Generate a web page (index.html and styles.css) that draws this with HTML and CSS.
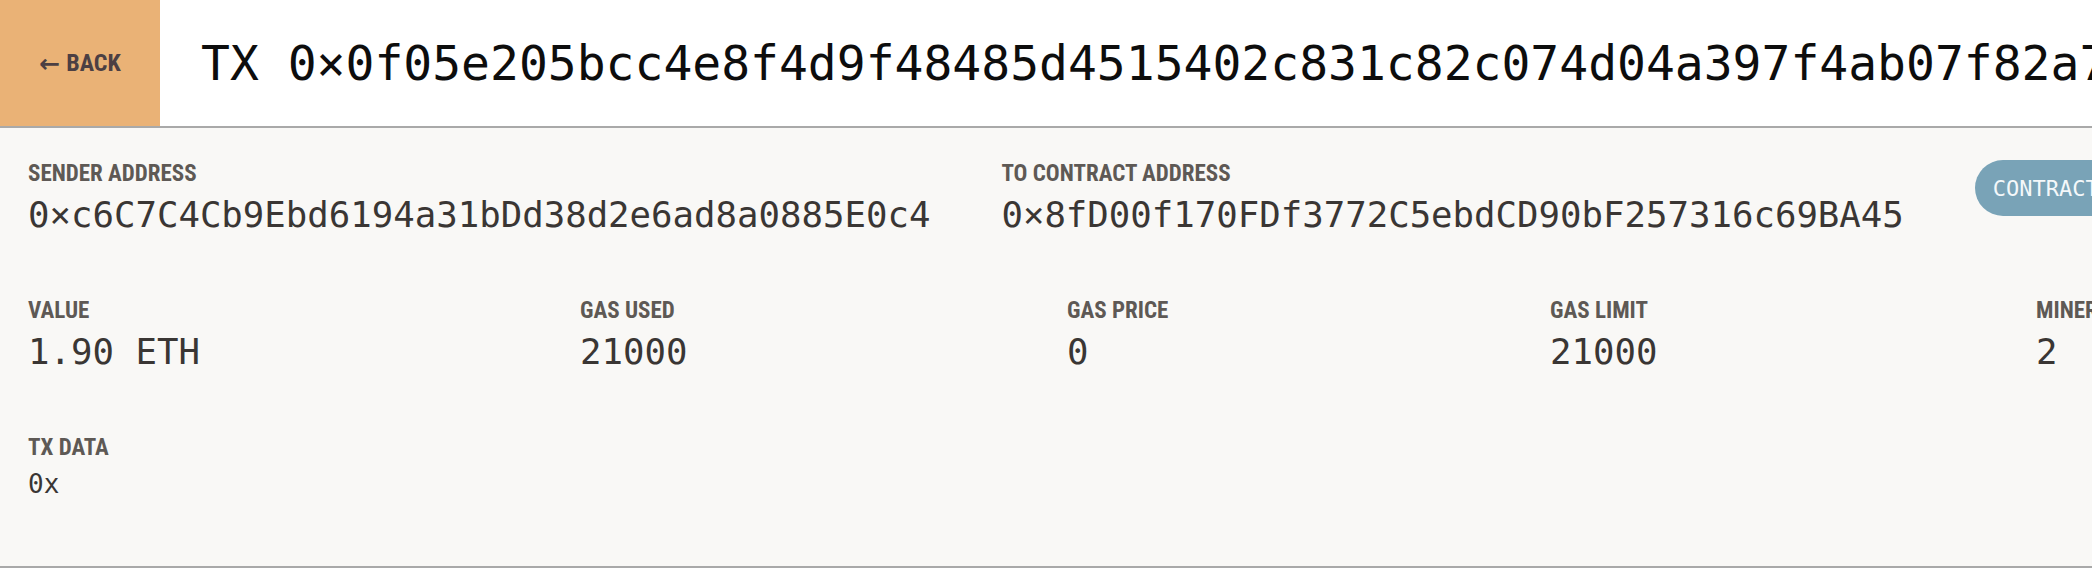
FILE: index.html
```html
<!DOCTYPE html>
<html lang="en">
<head>
<meta charset="utf-8">
<title>Transaction</title>
<link rel="stylesheet" href="styles.css">
</head>
<body>
<header class="topbar">
  <a class="back" href="#"><span class="back-arrow">←</span> BACK</a>
  <h1 class="title">TX 0×0f05e205bcc4e8f4d9f48485d4515402c831c82c074d04a397f4ab07f82a7e91</h1>
</header>
<section class="details">
  <div class="row row-addr">
    <div class="field">
      <div class="label">SENDER ADDRESS</div>
      <div class="value">0×c6C7C4Cb9Ebd6194a31bDd38d2e6ad8a0885E0c4</div>
    </div>
    <div class="field">
      <div class="label">TO CONTRACT ADDRESS</div>
      <div class="value">0×8fD00f170FDf3772C5ebdCD90bF257316c69BA45</div>
    </div>
    <span class="pill">CONTRACT</span>
  </div>
  <div class="row row-stats">
    <div class="field">
      <div class="label">VALUE</div>
      <div class="value">1.90 ETH</div>
    </div>
    <div class="field">
      <div class="label">GAS USED</div>
      <div class="value">21000</div>
    </div>
    <div class="field">
      <div class="label">GAS PRICE</div>
      <div class="value">0</div>
    </div>
    <div class="field">
      <div class="label">GAS LIMIT</div>
      <div class="value">21000</div>
    </div>
    <div class="field">
      <div class="label">MINER</div>
      <div class="value">2</div>
    </div>
  </div>
  <div class="row row-data">
    <div class="field">
      <div class="label">TX DATA</div>
      <div class="value value-small">0x</div>
    </div>
  </div>
</section>
</body>
</html>
```

FILE: styles.css
```css
html, body {
  margin: 0;
  padding: 0;
  background: #ffffff;
  overflow: hidden;
}

body {
  width: 2092px;
  height: 574px;
}

.topbar {
  display: flex;
  align-items: stretch;
  height: 126px;
  background: #ffffff;
  border-bottom: 2px solid #a9a9a9;
  white-space: nowrap;
}

.back {
  flex: 0 0 160px;
  display: flex;
  align-items: center;
  justify-content: center;
  background: #eab276;
  color: #4c3f43;
  text-decoration: none;
  font-family: "Liberation Sans Narrow", "Roboto Condensed", "DejaVu Sans Condensed", Roboto, sans-serif;
  font-weight: bold;
  font-size: 24px;
  line-height: 1;
}

.back-arrow {
  font-family: "DejaVu Sans", sans-serif;
  font-weight: bold;
  font-size: 25px;
  margin-right: 6px;
}

.title {
  margin: 0 0 0 41px;
  align-self: center;
  font-family: "DejaVu Sans Mono", monospace;
  font-weight: normal;
  font-size: 48px;
  color: #0d0d0d;
  white-space: nowrap;
}

.details {
  background: #f9f8f6;
  border-bottom: 2px solid #a9a9a9;
  padding: 30px 0 66px 28px;
  display: flex;
  flex-direction: column;
  gap: 59px;
  white-space: nowrap;
}

.row-addr {
  display: flex;
  align-items: flex-start;
  gap: 71px;
}

.row-stats {
  display: grid;
  grid-template-columns: 552px 487px 483px 486px auto;
}

.label {
  font-family: "Liberation Sans Narrow", "Roboto Condensed", "DejaVu Sans Condensed", Roboto, sans-serif;
  font-weight: bold;
  font-size: 23px;
  line-height: 32px;
  color: #5e5955;
}

.value {
  margin-top: 4px;
  font-family: "DejaVu Sans Mono", monospace;
  font-size: 35.7px;
  line-height: 42px;
  color: #3a3634;
}

.value-small {
  font-size: 26px;
  line-height: 32px;
}

.pill {
  margin-top: 2px;
  height: 56px;
  display: inline-flex;
  align-items: center;
  padding: 0 22px 0 18px;
  border-radius: 28px;
  background: #79a3b7;
  color: #f4f8fa;
  font-family: "DejaVu Sans Mono", monospace;
  font-size: 22px;
  flex: 0 0 auto;
}
```
